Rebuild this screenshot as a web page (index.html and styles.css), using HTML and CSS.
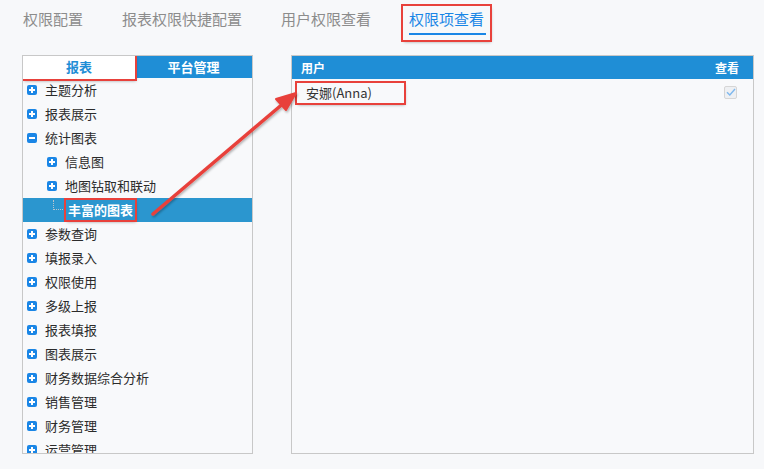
FILE: index.html
```html
<!DOCTYPE html>
<html lang="zh-CN">
<head>
    <meta charset="UTF-8">
    <title>权限项查看</title>
    <link rel="stylesheet" href="styles.css">
</head>
<body>
    <div class="tabs">
        <span class="tab">权限配置</span>
        <span class="tab">报表权限快捷配置</span>
        <span class="tab">用户权限查看</span>
        <span class="tab active mark">权限项查看</span>
    </div>
    <div class="main">
        <div class="panel tree-panel">
            <div class="tree-head">
                <span class="head-tab on mark">报表</span>
                <span class="head-tab">平台管理</span>
            </div>
            <ul class="tree">
                <li class="node"><i class="box"></i>主题分析</li>
                <li class="node"><i class="box"></i>报表展示</li>
                <li class="node"><i class="box minus"></i>统计图表</li>
                <li class="node child"><i class="box"></i>信息图</li>
                <li class="node child"><i class="box"></i>地图钻取和联动</li>
                <li class="node leaf selected"><i class="dots"></i><span class="mark">丰富的图表</span></li>
                <li class="node"><i class="box"></i>参数查询</li>
                <li class="node"><i class="box"></i>填报录入</li>
                <li class="node"><i class="box"></i>权限使用</li>
                <li class="node"><i class="box"></i>多级上报</li>
                <li class="node"><i class="box"></i>报表填报</li>
                <li class="node"><i class="box"></i>图表展示</li>
                <li class="node"><i class="box"></i>财务数据综合分析</li>
                <li class="node"><i class="box"></i>销售管理</li>
                <li class="node"><i class="box"></i>财务管理</li>
                <li class="node"><i class="box"></i>运营管理</li>
            </ul>
        </div>
        <div class="panel user-panel">
            <div class="grid-head">
                <span>用户</span>
                <span>查看</span>
            </div>
            <div class="grid-row">
                <span class="mark user">安娜(Anna)</span>
                <span class="check">
                    <svg width="10" height="8" viewBox="0 0 10 8"><path d="M1 4.2 L3.8 7 L9 1" fill="none" stroke="#7fb8ee" stroke-width="1.4"/></svg>
                </span>
            </div>
        </div>
    </div>
    <svg class="arrow" width="764" height="469" viewBox="0 0 764 469">
        <defs>
            <filter id="sh" x="-20%" y="-20%" width="140%" height="140%">
                <feDropShadow dx="1" dy="1.5" stdDeviation="1" flood-color="#000" flood-opacity="0.3"/>
            </filter>
        </defs>
        <g filter="url(#sh)">
            <line x1="153" y1="214" x2="285" y2="102" stroke="#e8413b" stroke-width="3.5" stroke-linecap="round"/>
            <path d="M296 93 L276 99 L286 110 Z" fill="#e8413b" stroke="#e8413b" stroke-width="2" stroke-linejoin="round"/>
        </g>
    </svg>
</body>
</html>
```

FILE: styles.css
```css
body {
    margin: 0;
    background: #f7f8fa;
    font-family: "Noto Sans CJK SC", "Noto Sans", sans-serif;
    color: #333;
    width: 764px;
    height: 469px;
    overflow: hidden;
    position: relative;
}

.mark {
    outline: 2px solid #e8413b;
    box-shadow: 1px 2px 3px rgba(0, 0, 0, 0.35);
}

.tabs {
    display: flex;
    padding: 0 0 0 23px;
    height: 55px;
    box-sizing: border-box;
}
.tab {
    font-size: 15px;
    color: #8c8c8c;
    margin-right: 39px;
    line-height: 22px;
    padding-top: 8px;
}
.tab.active {
    color: #1a86e6;
    align-self: flex-start;
    margin-top: 6px;
    padding: 2px 6px 0 6px;
    margin-left: -7px;
    height: 34px;
    box-sizing: border-box;
    position: relative;
}
.tab.active::after {
    content: "";
    position: absolute;
    left: 6px;
    right: 4px;
    bottom: 5px;
    height: 2px;
    background: #1a86e6;
}

.main {
    display: flex;
    padding-left: 22px;
    gap: 38px;
}
.panel {
    border: 1px solid #c8c8c8;
    height: 397px;
    background: #f8f9fb;
    overflow: hidden;
}
.tree-panel {
    width: 229px;
}
.user-panel {
    width: 461px;
}

.tree-head {
    display: flex;
    height: 22px;
    background: #1f8ed6;
}
.head-tab {
    flex: 1;
    text-align: center;
    font-size: 13px;
    font-weight: bold;
    color: #fff;
    line-height: 22px;
}
.head-tab.on {
    flex: none;
    width: 112px;
    height: 23px;
    background: #fff;
    color: #1f8ed6;
    position: relative;
    z-index: 1;
}

.tree {
    list-style: none;
    margin: 0;
    padding: 0;
}
.node {
    display: flex;
    align-items: center;
    height: 24px;
    box-sizing: border-box;
    padding-bottom: 1px;
    font-size: 13px;
    padding-left: 4px;
    color: #2b2b2b;
}
.node.child {
    padding-left: 24px;
}
.box {
    width: 10px;
    height: 10px;
    border-radius: 2px;
    background: #1a86e6;
    margin-right: 8px;
    position: relative;
}
.box::before,
.box::after {
    content: "";
    position: absolute;
    background: #fff;
}
.box::before {
    left: 2px;
    right: 2px;
    top: 4px;
    height: 2px;
}
.box::after {
    top: 2px;
    bottom: 2px;
    left: 4px;
    width: 2px;
}
.box.minus::after {
    display: none;
}
.node.selected {
    background: #2b96cf;
    color: #fff;
    font-weight: bold;
    padding-left: 30px;
}
.dots {
    width: 9px;
    height: 9px;
    margin-top: -9px;
    border-left: 1px dotted #b8c4cc;
    border-bottom: 1px dotted #b8c4cc;
    margin-right: 3px;
}
.node.selected .mark {
    padding: 0 2px;
    line-height: 20px;
}

.grid-head {
    display: flex;
    justify-content: space-between;
    height: 23px;
    background: #1f8ed6;
    color: #fff;
    font-size: 12px;
    font-weight: bold;
    line-height: 23px;
    padding: 0 14px 0 9px;
}
.grid-row {
    display: flex;
    justify-content: space-between;
    align-items: center;
    height: 26px;
    padding: 0 16px 0 5px;
}
.user {
    width: 98px;
    font-size: 13px;
    line-height: 20px;
    padding-left: 9px;
    margin-top: 1px;
}
.check {
    width: 11px;
    height: 11px;
    border: 1px solid #d6d6d6;
    border-radius: 2px;
    background: #eef0f3;
    display: flex;
    align-items: center;
    justify-content: center;
}

.arrow {
    position: absolute;
    left: 0;
    top: 0;
    pointer-events: none;
}
```
